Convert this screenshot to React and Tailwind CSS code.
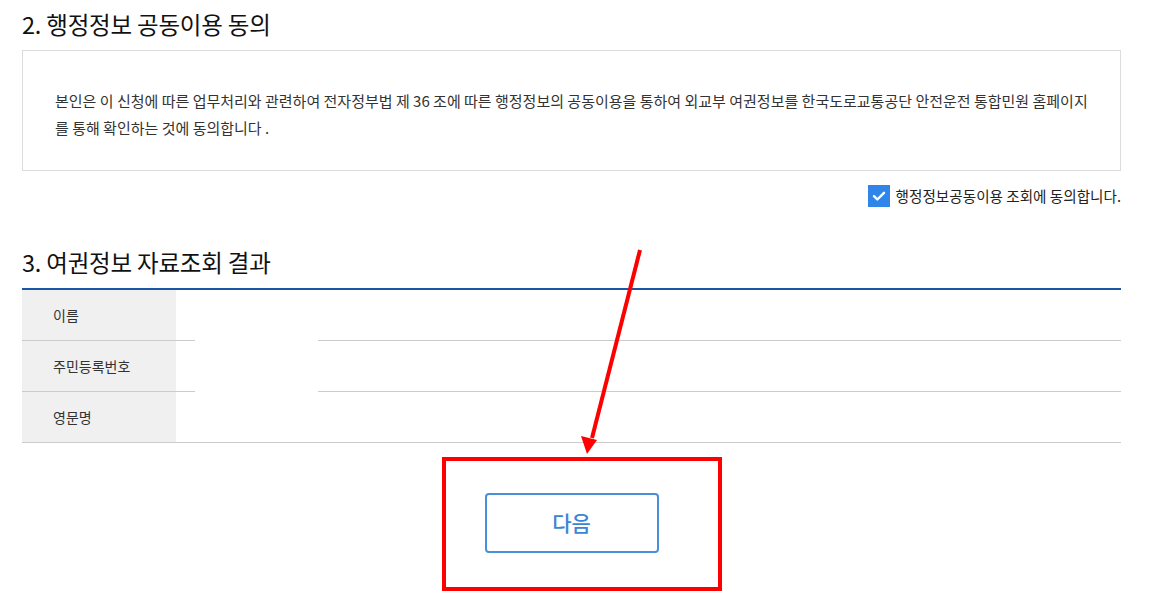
import React from 'react';

const rows = ['이름', '주민등록번호', '영문명'];

const App = () => {
  return (
    <div
      className="relative w-[1151px] h-[603px] bg-white text-[#333] overflow-hidden"
      style={{ fontFamily: '"Noto Sans CJK KR", "Noto Sans", sans-serif' }}
    >
      <div className="pl-[22px] w-[1121px]">
        {/* 2. consent */}
        <h2 className="h-[50px] flex items-center text-[23.5px] font-normal text-[#111] tracking-[-0.2px]">
          2. 행정정보 공동이용 동의
        </h2>
        <div className="h-[121px] border border-[#dcdcdc] pt-[36px] px-[32px] text-[15px] leading-[27px] text-[#333]">
          본인은 이 신청에 따른 업무처리와 관련하여 전자정부법 제 36 조에 따른 행정정보의 공동이용을 통하여 외교부 여권정보를 한국도로교통공단 안전운전 통합민원 홈페이지
          <br />
          를 통해 확인하는 것에 동의합니다 .
        </div>
        <div className="mt-[14px] flex justify-end items-center gap-[6px] h-[22px]">
          <span className="w-[22px] h-[22px] bg-[#2f86e8] flex items-center justify-center">
            <svg width="16" height="16" viewBox="0 0 16 16" fill="none">
              <path d="M3 8.2l3.3 3.3L13 4.8" stroke="white" strokeWidth="2.4" strokeLinecap="round" strokeLinejoin="round" />
            </svg>
          </span>
          <span className="text-[14.6px] text-[#222]">행정정보공동이용 조회에 동의합니다.</span>
        </div>

        {/* 3. result */}
        <h2 className="mt-[31px] h-[50px] flex items-center text-[23.5px] font-normal text-[#111] tracking-[-0.2px]">
          3. 여권정보 자료조회 결과
        </h2>
        <div className="relative border-t-2 border-[#1a56a8]">
          {rows.map((r) => (
            <div key={r} className="flex h-[51px] border-b border-[#cccccc]">
              <div className="w-[154px] bg-[#f0f0f0] pl-[31px] flex items-center text-[14px] text-[#333]">{r}</div>
              <div className="flex-1" />
            </div>
          ))}
          <div className="absolute left-[173px] top-0 w-[123px] h-[108px] bg-white" />
        </div>

        {/* button */}
        <div className="relative mt-[50px] flex justify-center">
          <button className="w-[174px] h-[60px] border-2 border-[#4a90d9] rounded-[4px] text-[#3a86d6] text-[21px] font-medium bg-white">
            다음
          </button>
          <div className="absolute left-[420px] top-[-36px] w-[280px] h-[134px] border-[4px] border-[#ff0000]" />
        </div>
      </div>

      {/* annotation arrow */}
      <svg className="absolute left-0 top-0 pointer-events-none" width="1151" height="603">
        <line x1="640" y1="250" x2="592" y2="438" stroke="#ff0000" strokeWidth="4" />
        <polygon points="581,436 597,440 587,454" fill="#ff0000" />
      </svg>
    </div>
  );
};

export default App;
